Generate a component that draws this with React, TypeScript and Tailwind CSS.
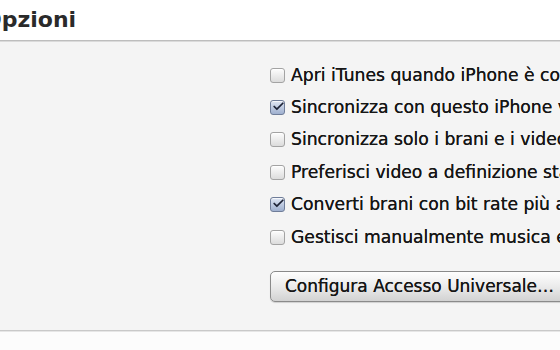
import { Check } from 'lucide-react';

const options = [
  { label: 'Apri iTunes quando iPhone è collegato', checked: false },
  { label: 'Sincronizza con questo iPhone via Wi-Fi', checked: true },
  { label: 'Sincronizza solo i brani e i video selezionati', checked: false },
  { label: 'Preferisci video a definizione standard', checked: false },
  { label: 'Converti brani con bit rate più alto a 128 kbps AAC', checked: true },
  { label: 'Gestisci manualmente musica e video', checked: false },
];

const Checkbox = ({ checked }: { checked: boolean }) =>
  checked ? (
    <span className="flex h-[15px] w-[15px] shrink-0 items-center justify-center rounded-[3px] border border-[#6f7d99] bg-gradient-to-b from-[#dfe6f3] to-[#9fb0cf] shadow-[inset_0_1px_0_rgba(255,255,255,0.7)]">
      <Check className="h-[13px] w-[13px] -translate-y-[1px] translate-x-[1px] text-[#1d2336]" strokeWidth={3.2} />
    </span>
  ) : (
    <span className="h-[15px] w-[15px] shrink-0 rounded-[3px] border border-[#a3a3a3] bg-gradient-to-b from-[#fdfdfd] to-[#dcdcdc] shadow-[inset_0_1px_0_#fff]" />
  );

export default function App() {
  return (
    <div className="h-[350px] w-[560px] overflow-hidden bg-white font-['DejaVu_Sans',sans-serif] text-[#161616]">
      <div className="flex h-[40px] items-center">
        <h1 className="-ml-[17px] whitespace-nowrap text-[22px] font-bold leading-none text-[#2a2a2a]">
          Opzioni
        </h1>
      </div>
      <div className="h-[1px] bg-[#bdbdbd]" />
      <div className="h-[1px] bg-[#dadada]" />

      <div className="h-[288px] bg-[#f4f4f4] pl-[270px] pt-[17px]">
        <div className="flex flex-col">
          {options.map((o) => (
            <label
              key={o.label}
              className="flex h-[32.4px] items-center gap-[6px] whitespace-nowrap text-[17.2px] leading-none [text-shadow:0_0_0.4px_#161616]"
            >
              <Checkbox checked={o.checked} />
              <span>{o.label}</span>
            </label>
          ))}
        </div>
        <button className="mt-[18px] flex h-[31px] w-[320px] items-center whitespace-nowrap rounded-[5px] border border-[#8a8a8a] bg-gradient-to-b from-[#fefefe] via-[#ebebeb] to-[#d2d2d2] pl-[14px] text-[17px] leading-none text-[#161616] shadow-[0_1px_1px_rgba(0,0,0,0.15)] [text-shadow:0_0_0.4px_#161616]">
          Configura Accesso Universale…
        </button>
      </div>

      <div className="h-[1px] bg-[#c9c9c9]" />
      <div className="h-[1px] bg-[#e6e6e6]" />
      <div className="h-[20px] bg-[#fcfcfc]" />
    </div>
  );
}
